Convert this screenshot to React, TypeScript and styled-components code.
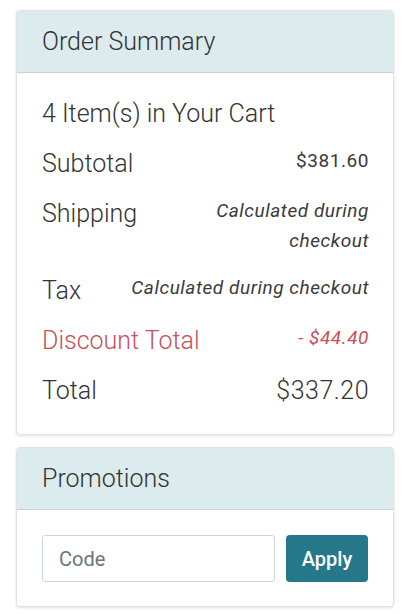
import React from "react";
import styled, { createGlobalStyle } from "styled-components";

const Global = createGlobalStyle`
  html, body { margin: 0; padding: 0; background: #ffffff; }
  body { font-family: Roboto, "Noto Sans", sans-serif; color: #333; }
  * { box-sizing: border-box; }
`;

const Page = styled.div`
  padding: 10px 16px 8px 16px;
  display: flex;
  flex-direction: column;
  gap: 12px;
`;

const Card = styled.section`
  background: #fff;
  border: 1px solid #e2e2e2;
  border-radius: 4px;
  box-shadow: 0 1px 3px rgba(0, 0, 0, 0.12);
  overflow: hidden;
`;

const CardHeader = styled.header`
  height: 62px;
  display: flex;
  align-items: center;
  padding: 0 25px;
  background: #dcebee;
  border-bottom: 1px solid #c9d3d6;
  font-size: 25px;
  font-weight: 300;
  color: #333;
`;

const SummaryBody = styled.div`
  padding: 26px 24px 28px 25px;
  display: flex;
  flex-direction: column;
  gap: 20px;
`;

const ItemCount = styled.div`
  font-size: 25px;
  font-weight: 300;
  line-height: 30px;
  color: #333;
`;

const Row = styled.div`
  display: flex;
  justify-content: space-between;
  align-items: flex-start;
  gap: 14px;
`;

const Label = styled.div<{ $tone?: "danger" }>`
  font-size: 25px;
  font-weight: 300;
  line-height: 30px;
  white-space: nowrap;
  color: ${(p) => (p.$tone === "danger" ? "#c8505a" : "#333")};
`;

const Value = styled.div<{ $italic?: boolean; $big?: boolean; $wrap?: boolean; $tone?: "danger" }>`
  text-align: right;
  font-size: ${(p) => (p.$big ? "25px" : "19px")};
  font-weight: ${(p) => (p.$big ? 300 : 400)};
  font-style: ${(p) => (p.$italic ? "italic" : "normal")};
  letter-spacing: ${(p) => (p.$big ? "0.5px" : "0.55px")};
  line-height: 30px;
  color: ${(p) => (p.$tone === "danger" ? "#c8505a" : p.$big ? "#333" : "#3a3a3a")};
  max-width: ${(p) => (p.$wrap ? "180px" : "none")};
  margin-top: ${(p) => (p.$big ? "0" : "-3px")};
`;

const PromoBody = styled.div`
  padding: 25px 25px 24px 25px;
  display: flex;
  gap: 11px;
`;

const CodeInput = styled.input`
  width: 233px;
  height: 47px;
  border: 1px solid #ced4da;
  border-radius: 3px;
  padding: 0 16px;
  font-family: Roboto, sans-serif;
  font-size: 20px;
  color: #333;
  outline: none;
  &::placeholder { color: #6c757d; }
`;

const ApplyButton = styled.button`
  width: 82px;
  height: 47px;
  border: none;
  border-radius: 4px;
  background: #25788a;
  color: #fff;
  font-family: Roboto, sans-serif;
  font-size: 20px;
  font-weight: 500;
  cursor: pointer;
`;

export default function App() {
  return (
    <>
      <Global />
      <Page>
        <Card>
          <CardHeader>Order Summary</CardHeader>
          <SummaryBody>
            <ItemCount>4 Item(s) in Your Cart</ItemCount>
            <Row>
              <Label>Subtotal</Label>
              <Value>$381.60</Value>
            </Row>
            <Row>
              <Label>Shipping</Label>
              <Value $italic $wrap>Calculated during checkout</Value>
            </Row>
            <Row>
              <Label>Tax</Label>
              <Value $italic>Calculated during checkout</Value>
            </Row>
            <Row>
              <Label $tone="danger">Discount Total</Label>
              <Value $italic $tone="danger">- $44.40</Value>
            </Row>
            <Row>
              <Label>Total</Label>
              <Value $big>$337.20</Value>
            </Row>
          </SummaryBody>
        </Card>
        <Card>
          <CardHeader>Promotions</CardHeader>
          <PromoBody>
            <CodeInput placeholder="Code" />
            <ApplyButton>Apply</ApplyButton>
          </PromoBody>
        </Card>
      </Page>
    </>
  );
}
